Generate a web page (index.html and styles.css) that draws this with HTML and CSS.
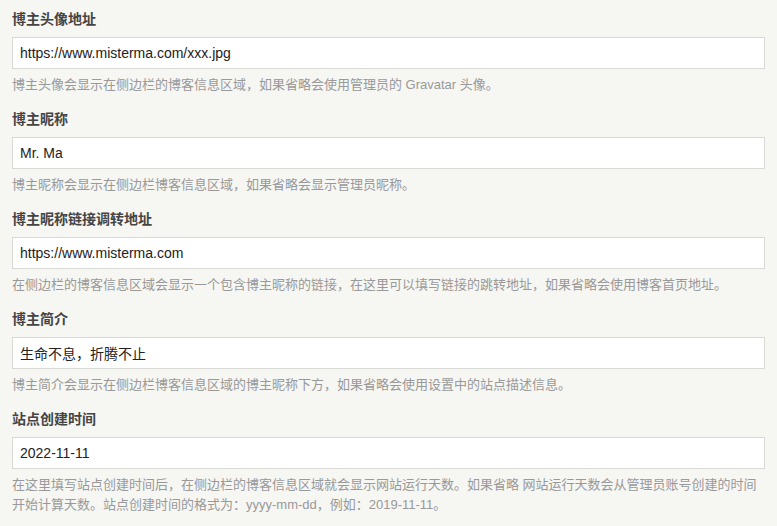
FILE: index.html
```html
<!DOCTYPE html>
<html lang="zh-CN">
<head>
<meta charset="utf-8">
<title>设置</title>
<link rel="stylesheet" href="styles.css">
</head>
<body>
<form class="options">
  <div class="option">
    <label class="option-label">博主头像地址</label>
    <input class="text-input" type="text" value="https://www.misterma.com/xxx.jpg">
    <p class="description">博主头像会显示在侧边栏的博客信息区域，如果省略会使用管理员的 Gravatar 头像。</p>
  </div>
  <div class="option">
    <label class="option-label">博主昵称</label>
    <input class="text-input" type="text" value="Mr. Ma">
    <p class="description">博主昵称会显示在侧边栏博客信息区域，如果省略会显示管理员昵称。</p>
  </div>
  <div class="option">
    <label class="option-label">博主昵称链接调转地址</label>
    <input class="text-input" type="text" value="https://www.misterma.com">
    <p class="description">在侧边栏的博客信息区域会显示一个包含博主昵称的链接，在这里可以填写链接的跳转地址，如果省略会使用博客首页地址。</p>
  </div>
  <div class="option">
    <label class="option-label">博主简介</label>
    <input class="text-input" type="text" value="生命不息，折腾不止">
    <p class="description">博主简介会显示在侧边栏博客信息区域的博主昵称下方，如果省略会使用设置中的站点描述信息。</p>
  </div>
  <div class="option">
    <label class="option-label">站点创建时间</label>
    <input class="text-input" type="text" value="2022-11-11">
    <p class="description">在这里填写站点创建时间后，在侧边栏的博客信息区域就会显示网站运行天数。如果省略 网站运行天数会从管理员账号创建的时间开始计算天数。站点创建时间的格式为：yyyy-mm-dd，例如：2019-11-11。</p>
  </div>
</form>
</body>
</html>
```

FILE: styles.css
```css
html, body {
  margin: 0;
  padding: 0;
  background: #f6f6f3;
}
body {
  font-family: "Liberation Sans", Arial, "Noto Sans CJK SC", sans-serif;
  color: #444;
  font-size: 14px;
}
.options {
  display: flex;
  flex-direction: column;
  padding: 0 12px;
  width: 753px;
}
.option {
  display: flex;
  flex-direction: column;
  padding-top: 9px;
  padding-bottom: 5px;
}
.option-label {
  display: block;
  font-weight: bold;
  font-size: 14px;
  line-height: 20px;
  color: #444;
  margin-bottom: 8px;
}
.text-input {
  box-sizing: border-box;
  width: 753px;
  height: 32px;
  margin: 0;
  padding: 0 7px;
  border: 1px solid #d9d9d6;
  border-radius: 0;
  background: #fff;
  font-family: "Liberation Sans", Arial, "Noto Sans CJK SC", sans-serif;
  font-size: 14px;
  color: #222;
  outline: none;
}
.description {
  margin: 6px 0 0;
  font-size: 13px;
  line-height: 20px;
  color: #999;
}
```
